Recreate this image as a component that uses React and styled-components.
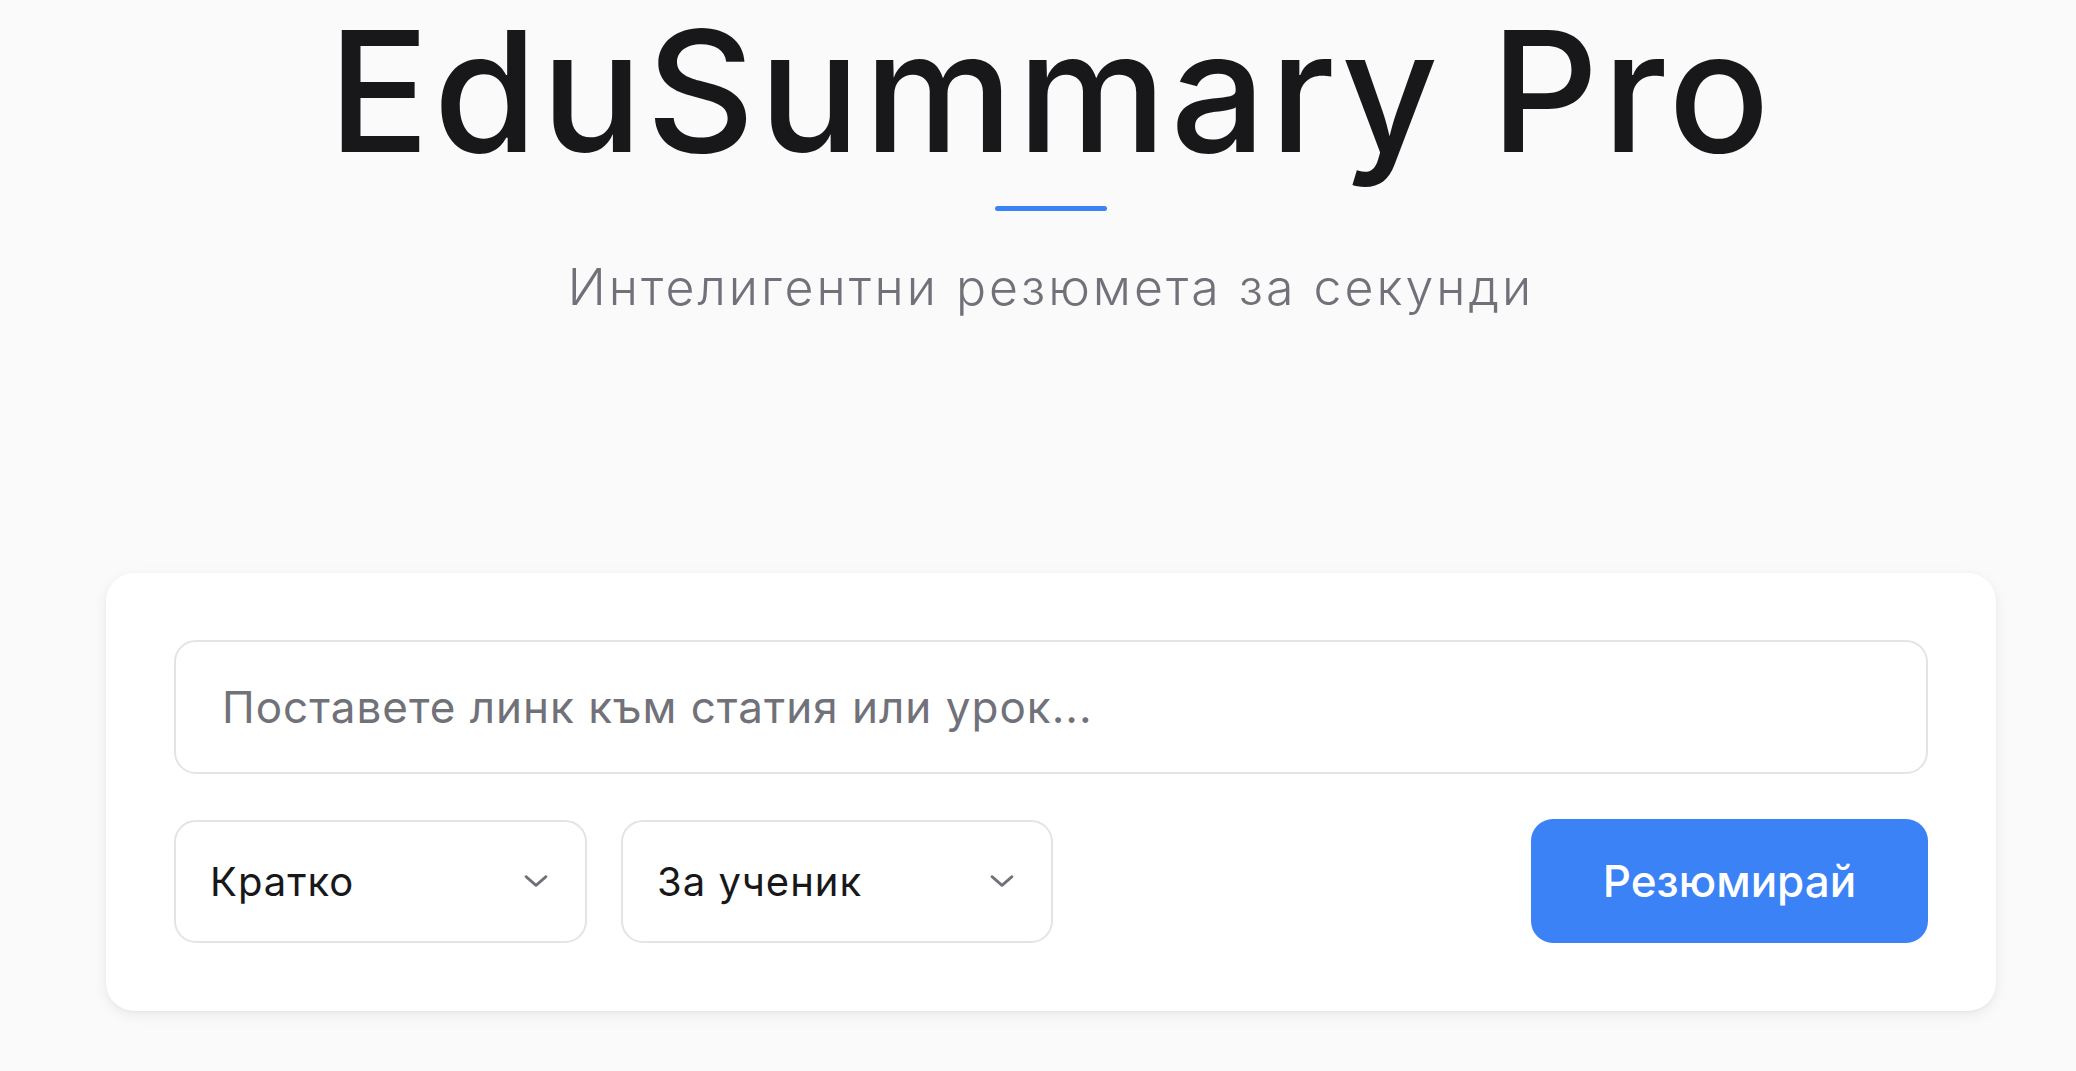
import React from "react";
import styled, { createGlobalStyle } from "styled-components";

const Global = createGlobalStyle`
  html, body {
    margin: 0;
    padding: 0;
    background: #fafafa;
  }
  body {
    font-family: Inter, "Noto Sans", "Liberation Sans", sans-serif;
    color: #18181b;
    overflow: hidden;
  }
  * { box-sizing: border-box; }
`;

const Page = styled.main`
  min-height: 1071px;
  padding-left: 26px;
  display: flex;
  flex-direction: column;
  align-items: center;
`;

const Header = styled.header`
  display: flex;
  flex-direction: column;
  align-items: center;
`;

const Title = styled.h1`
  margin: 7px 0 0;
  font-size: 168px;
  line-height: 1;
  font-weight: 500;
  letter-spacing: 4px;
  color: #18181b;
`;

const Accent = styled.div`
  width: 112px;
  height: 5px;
  border-radius: 3px;
  background: #3b82f6;
  margin-top: 31px;
`;

const Subtitle = styled.p`
  margin: 46px 0 0;
  font-size: 50px;
  line-height: 1.2;
  font-weight: 300;
  letter-spacing: 3px;
  color: #71717a;
`;

const Card = styled.section`
  margin-top: 256px;
  width: 1890px;
  background: #ffffff;
  border-radius: 28px;
  padding: 67px 68px 68px;
  box-shadow: 0 4px 14px rgba(0, 0, 0, 0.07), 0 1px 3px rgba(0, 0, 0, 0.04);
  display: flex;
  flex-direction: column;
  gap: 45px;
`;

const UrlInput = styled.input`
  width: 100%;
  height: 134px;
  border: 2px solid #e4e4e7;
  border-radius: 22px;
  padding: 0 46px;
  font-family: inherit;
  font-size: 44px;
  font-weight: 400;
  letter-spacing: 1px;
  color: #18181b;
  background: #fff;
  outline: none;
  &::placeholder {
    color: #71717a;
  }
`;

const Controls = styled.div`
  display: flex;
  align-items: center;
  gap: 34px;
`;

const SelectWrap = styled.div`
  position: relative;
  width: ${(p) => p.$w}px;
  height: 123px;
`;

const Select = styled.select`
  appearance: none;
  -webkit-appearance: none;
  width: 100%;
  height: 100%;
  border: 2px solid #e4e4e7;
  border-radius: 22px;
  background: #fff;
  padding: 0 80px 0 34px;
  font-family: inherit;
  font-size: 40px;
  font-weight: 400;
  letter-spacing: 1px;
  color: #18181b;
  outline: none;
`;

const Chevron = styled.svg`
  position: absolute;
  right: 36px;
  top: 50%;
  transform: translateY(-50%);
  width: 30px;
  height: 30px;
  pointer-events: none;
`;

const Spacer = styled.div`
  flex: 1;
`;

const Button = styled.button`
  width: 397px;
  height: 124px;
  border: none;
  border-radius: 22px;
  background: #3b82f6;
  color: #fff;
  font-family: inherit;
  font-size: 44px;
  font-weight: 500;
  cursor: pointer;
`;

const ChevronIcon = () => (
  <Chevron viewBox="0 0 24 24" fill="none" stroke="#71717a" strokeWidth="2.2" strokeLinecap="round" strokeLinejoin="round">
    <path d="M4 8.5 12 15.5 20 8.5" />
  </Chevron>
);

export default function App() {
  return (
    <>
      <Global />
      <Page lang="bg">
        <Header>
          <Title lang="en">EduSummary Pro</Title>
          <Accent />
          <Subtitle>Интелигентни резюмета за секунди</Subtitle>
        </Header>
        <Card>
          <UrlInput placeholder="Поставете линк към статия или урок..." />
          <Controls>
            <SelectWrap $w={413}>
              <Select defaultValue="short">
                <option value="short">Кратко</option>
                <option value="long">Подробно</option>
              </Select>
              <ChevronIcon />
            </SelectWrap>
            <SelectWrap $w={432}>
              <Select defaultValue="student">
                <option value="student">За ученик</option>
                <option value="teacher">За учител</option>
              </Select>
              <ChevronIcon />
            </SelectWrap>
            <Spacer />
            <Button>Резюмирай</Button>
          </Controls>
        </Card>
      </Page>
    </>
  );
}
